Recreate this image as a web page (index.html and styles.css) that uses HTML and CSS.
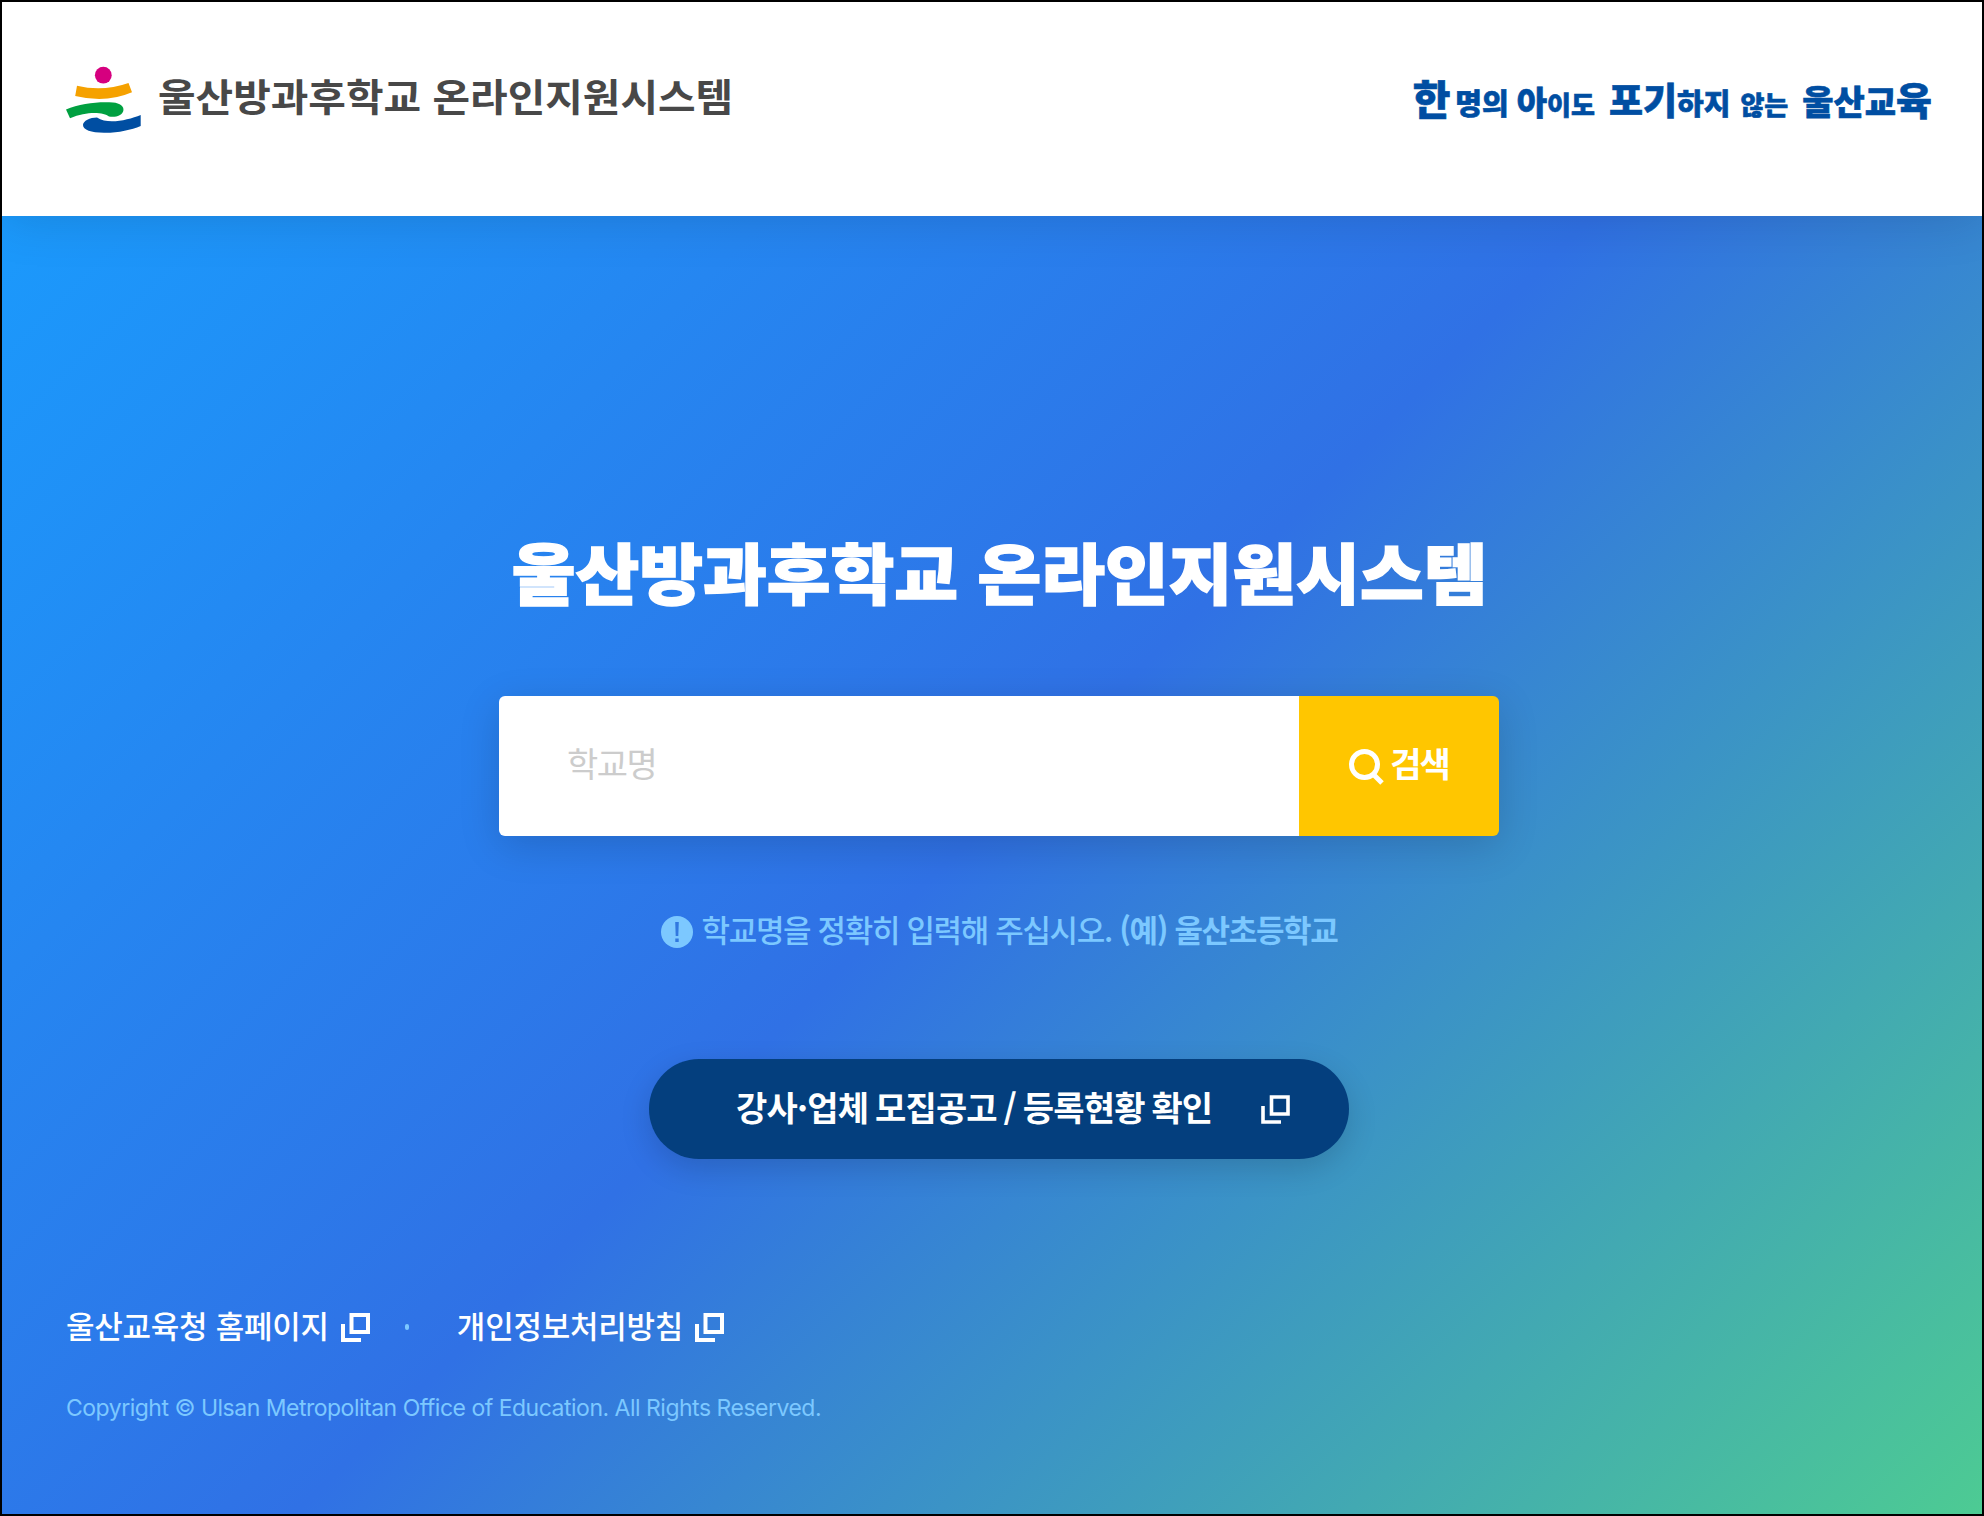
FILE: index.html
```
<!DOCTYPE html>
<html lang="ko">
<head>
  <meta charset="UTF-8">
  <title>울산방과후학교 온라인지원시스템</title>
  <link rel="stylesheet" href="styles.css">
</head>

<body>
  <header class="header">
    <a href="#" class="logo">
      <svg class="logo-mark" viewBox="0 0 76 68" aria-hidden="true">
        <circle cx="37.3" cy="9.2" r="8.4" fill="#d6007f"/>
        <path d="M11 19.8Q37 26 62.500 17L66 26.300Q40 37.500 9.200 30Z" fill="#f5a100"/>
        <path d="M0 43.500C14 37 34 35.500 47 36.500C54 37 58.500 40.500 57.300 45C56 49.500 50 51.500 43 50.500C38 46.500 22 44.500 4 52.300Z" fill="#00a040"/>
        <path d="M31 51.500C24 51.500 17 55 17 59C17 64 25 66.500 38 66.800C52 67 65 64 74.700 60V49C62 54 42 59 31 51.500Z" fill="#004ea2"/>
      </svg>
      <span class="logo-text">울산방과후학교 온라인지원시스템</span>
    </a>
    <p class="slogan">
      <span class="w1"><b>한</b>명의</span>
      <span class="w2"><b>아</b>이도</span>
      <span class="w3"><b>포기</b>하지</span>
      <span class="w4">않는</span>
      <span class="w5">울산교<b>육</b></span>
    </p>
  </header>

  <main class="main">
    <h1>울산방과후학교 온라인지원시스템</h1>

    <form class="search">
      <input type="text" placeholder="학교명">
      <button type="button">
        <svg class="icon-search" viewBox="0 0 35 36" aria-hidden="true">
          <circle cx="15.500" cy="15.500" r="13" fill="none" stroke="#fff" stroke-width="5"/>
          <path d="M24 25L33 34" stroke="#fff" stroke-width="5"/>
        </svg>
        <span>검색</span>
      </button>
    </form>

    <p class="hint">
      <svg class="icon-info" viewBox="0 0 32 32" aria-hidden="true">
        <circle cx="16" cy="16" r="16" fill="#7cc8ff"/>
        <path d="M14.200 6h3.600l-.5 14h-2.600zM14.300 22.500h3.400v3.500h-3.400z" fill="#3178df"/>
      </svg>
      <span>학교명을 정확히 입력해 주십시오. <strong>(예) 울산초등학교</strong></span>
    </p>

    <a href="#" class="notice-btn">
      <span>강사·업체 모집공고 / 등록현황 확인</span>
      <svg class="icon-link" viewBox="0 0 29 29" aria-hidden="true">
        <path d="M10.500 2H27V19H10.500ZM2 11V27H20" fill="none" stroke="#fff" stroke-width="3.600"/>
      </svg>
    </a>
  </main>

  <footer class="footer">
    <ul class="links">
      <li>
        <a href="#"><span>울산교육청 홈페이지</span>
          <svg class="icon-link" viewBox="0 0 29 29" aria-hidden="true">
            <path d="M10.500 2H27V19H10.500ZM2 11V27H20" fill="none" stroke="#fff" stroke-width="4"/>
          </svg>
        </a>
      </li>
      <li>
        <a href="#"><span>개인정보처리방침</span>
          <svg class="icon-link" viewBox="0 0 29 29" aria-hidden="true">
            <path d="M10.500 2H27V19H10.500ZM2 11V27H20" fill="none" stroke="#fff" stroke-width="4"/>
          </svg>
        </a>
      </li>
    </ul>
    <p class="copyright">Copyright © Ulsan Metropolitan Office of Education. All Rights Reserved.</p>
  </footer>
</body>
</html>
```
FILE: styles.css
```
* {
  box-sizing: border-box;
  margin: 0;
  padding: 0;
}

body {
  display: flex;
  flex-direction: column;
  height: 1516px;
  border: 2px solid #000;
  background: linear-gradient(135deg, #189fff 0%, #3071e5 51.7%, #4dcb93 100%);
  font-family: "Noto Sans CJK KR", sans-serif;
  color: #fff;
}

a {
  color: inherit;
  text-decoration: none;
}

.header {
  display: flex;
  justify-content: space-between;
  height: 214px;
  padding: 64px 50px 0 64px;
  background: #fff;
  box-shadow: 0 0 50px rgba(0, 0, 0, 0.15);
}

.logo {
  display: flex;
  align-items: flex-start;
  gap: 16px;
}

.logo-mark {
  width: 76px;
  height: 68px;
}

.logo-text {
  font-size: 38px;
  font-weight: 700;
  line-height: 58px;
  color: #484848;
  transform: scaleX(1.075);
  transform-origin: left;
}

.slogan {
  display: flex;
  align-items: baseline;
  height: 62px;
  line-height: 62px;
  font-size: 29px;
  font-weight: 900;
  color: #004ea2;
  -webkit-text-stroke: 0.6px #004ea2;
}

.slogan b {
  font-size: 37px;
  font-weight: 900;
}

.slogan .w1 b {
  margin-right: 5px;
  font-size: 41px;
}

.slogan .w2 {
  margin-left: 8px;
  font-size: 26px;
}

.slogan .w2 b {
  font-size: 33px;
}

.slogan .w3 {
  margin-left: 14px;
}

.slogan .w4 {
  margin-left: 10px;
  font-size: 26px;
}

.slogan .w5 {
  margin-left: 14px;
  font-size: 34px;
}

.slogan .w5 b {
  font-size: 39px;
}

.main {
  display: flex;
  flex-direction: column;
  align-items: center;
  padding: 300px 0 0 14px;
}

h1 {
  height: 110px;
  font-size: 66px;
  font-weight: 900;
  line-height: 108px;
  -webkit-text-stroke: 1.500px #fff;
  transform: translateX(1px) scaleX(1.050);
}

.search {
  display: flex;
  width: 1000px;
  height: 140px;
  margin-top: 70px;
  border-radius: 6px;
  overflow: hidden;
  box-shadow: 0 10px 40px rgba(0, 0, 0, 0.15);
}

.search input {
  flex: 1;
  padding: 0 68px 8px;
  border: 0;
  background: #fff;
  font-family: inherit;
  font-size: 34px;
  letter-spacing: -1.500px;
}

.search input::placeholder {
  color: #ccc;
}

.search button {
  display: flex;
  align-items: center;
  justify-content: center;
  gap: 6px;
  width: 200px;
  border: 0;
  background: #ffc600;
  color: #fff;
  font-family: inherit;
  font-size: 34px;
  font-weight: 700;
  letter-spacing: -2px;
}

.search button span {
  padding-bottom: 8px;
}

.icon-search {
  width: 35px;
  height: 36px;
  margin-top: 2px;
}

.hint {
  display: flex;
  align-items: center;
  gap: 9px;
  margin-top: 72px;
  height: 48px;
  font-size: 31px;
  font-weight: 500;
  letter-spacing: -1.350px;
  color: #7cc8ff;
}

.hint span {
  padding-bottom: 7px;
}

.hint strong {
  font-weight: 700;
}

.icon-info {
  width: 32px;
  height: 32px;
}

.notice-btn {
  display: flex;
  align-items: center;
  justify-content: space-between;
  width: 700px;
  height: 100px;
  margin-top: 103px;
  padding: 0 59px 0 87px;
  border-radius: 50px;
  background: #043f7e;
  box-shadow: 0 10px 30px rgba(0, 0, 0, 0.15);
  font-size: 34px;
  font-weight: 700;
  letter-spacing: -0.800px;
  word-spacing: -2px;
}

.notice-btn span {
  padding-bottom: 6px;
}

.icon-link {
  width: 29px;
  height: 29px;
}

.footer {
  margin-top: 144px;
  padding: 0 64px;
}

.links {
  display: flex;
  list-style: none;
  font-size: 31px;
  font-weight: 500;
  line-height: 44px;
  letter-spacing: -0.250px;
}

.links a {
  display: flex;
  align-items: center;
  gap: 12px;
}

.links span {
  padding-bottom: 4px;
}

.links li + li {
  display: flex;
  align-items: center;
}

.links li + li::before {
  content: "";
  width: 4px;
  height: 6px;
  margin: 0 48px 0 35px;
  border-radius: 2px;
  background: #7cc8ff;
}

.copyright {
  margin-top: 41px;
  font-family: Inter, sans-serif;
  font-size: 23px;
  line-height: 32px;
  letter-spacing: -0.500px;
  color: #7cc8ff;
}
```
